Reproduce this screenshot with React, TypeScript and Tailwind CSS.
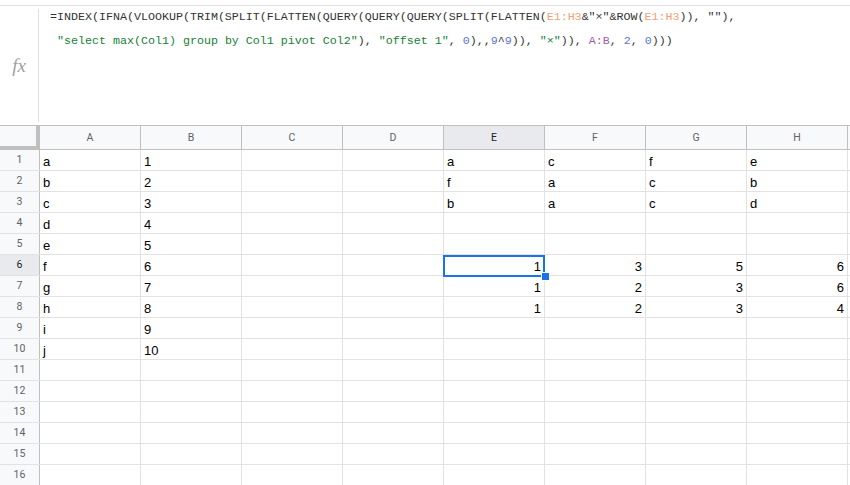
import React from "react";

const COLS = ["A", "B", "C", "D", "E", "F", "G", "H"];

type Cell = { v: string; num?: boolean };

function buildData(): Cell[][] {
  const rows: Cell[][] = [];
  const letters = "abcdefghij".split("");
  const top = [
    ["a", "c", "f", "e"],
    ["f", "a", "c", "b"],
    ["b", "a", "c", "d"],
  ];
  const nums = [
    ["1", "3", "5", "6"],
    ["1", "2", "3", "6"],
    ["1", "2", "3", "4"],
  ];
  for (let r = 0; r < 16; r++) {
    const row: Cell[] = [];
    for (let c = 0; c < 8; c++) row.push({ v: "" });
    if (r < 10) {
      row[0] = { v: letters[r] };
      row[1] = { v: String(r + 1) };
    }
    if (r < 3) {
      for (let c = 0; c < 4; c++) row[4 + c] = { v: top[r][c] };
    }
    if (r >= 5 && r < 8) {
      for (let c = 0; c < 4; c++) row[4 + c] = { v: nums[r - 5][c], num: true };
    }
    rows.push(row);
  }
  return rows;
}

const D = "text-[#333333]";
const S = "text-[#188038]";
const R = "text-[#f0a274]";
const P = "text-[#a35ab0]";
const N = "text-[#5c73d6]";

export default function App() {
  const data = buildData();
  return (
    <div
      className="relative w-[850px] h-[485px] overflow-hidden bg-white"
      style={{ fontFamily: "'Liberation Sans', Arial, sans-serif" }}
    >
      {/* formula bar */}
      <div className="h-[5px]" />
      <div className="flex h-[120px] border-t border-[#e0e0e0]">
        <div className="w-[38px] flex items-center justify-center pt-[2px]">
          <span
            className="italic text-[19px] text-[#a0a0a0]"
            style={{ fontFamily: "'Liberation Serif', 'Times New Roman', serif" }}
          >
            fx
          </span>
        </div>
        <div className="my-[3px] w-px bg-[#e0e0e0]" />
        <div
          className="pl-[11px] -mt-[1px] text-[11.67px] leading-[24px] whitespace-pre"
          style={{ fontFamily: "'Liberation Mono', 'DejaVu Sans Mono', monospace" }}
        >
          <div className={D}>
            {"=INDEX(IFNA(VLOOKUP(TRIM(SPLIT(FLATTEN(QUERY(QUERY(QUERY(SPLIT(FLATTEN("}
            <span className={R}>E1:H3</span>
            {'&"×"&ROW('}
            <span className={R}>E1:H3</span>
            {')), ""),'}
          </div>
          <div className={D}>
            {" "}
            <span className={S}>{'"select max(Col1) group by Col1 pivot Col2"'}</span>
            {"), "}
            <span className={S}>{'"offset 1"'}</span>
            {", "}
            <span className={N}>0</span>
            {"),,"}
            <span className={N}>9</span>
            {"^"}
            <span className={N}>9</span>
            {")), "}
            <span className={S}>{'"×"'}</span>
            {")), "}
            <span className={P}>A:B</span>
            {", "}
            <span className={N}>2</span>
            {", "}
            <span className={N}>0</span>
            {")))"}
          </div>
        </div>
      </div>

      {/* column header */}
      <div
        className="flex h-[25px] border-t border-b border-[#c0c0c0] bg-[#f8f9fa]"
        style={{ fontFamily: "Roboto, 'Liberation Sans', Arial, sans-serif" }}
      >
        <div className="w-[40px] shrink-0 border-r-[4px] border-b-[3px] border-[#c0c0c0] bg-[#f8f9fa]" />
        {COLS.map((c) => (
          <div
            key={c}
            className={
              "w-[101px] shrink-0 border-r border-[#c0c0c0] flex items-center justify-center text-[10.5px] " +
              (c === "E" ? "bg-[#e8eaed] text-[#202124]" : "text-[#5f6368]")
            }
          >
            {c}
          </div>
        ))}
        <div className="flex-1 bg-[#f8f9fa]" />
      </div>

      {/* rows */}
      {data.map((row, r) => (
        <div key={r} className="flex h-[21px] border-b border-[#e2e2e2]">
          <div
            className={
              "w-[40px] shrink-0 border-r border-[#c0c0c0] flex items-center justify-center text-[10.5px] " +
              (r === 5 ? "bg-[#e8eaed] text-[#202124]" : "bg-[#f8f9fa] text-[#5f6368]")
            }
            style={{ fontFamily: "Roboto, 'Liberation Sans', Arial, sans-serif" }}
          >
            {r + 1}
          </div>
          {row.map((cell, c) => (
            <div
              key={c}
              className={
                "w-[101px] shrink-0 border-r border-[#e2e2e2] flex items-end px-[3px] pb-[1px] text-[13px] leading-[15px] text-black " +
                (cell.num ? "justify-end" : "justify-start")
              }
            >
              {cell.v}
            </div>
          ))}
          <div className="flex-1" />
        </div>
      ))}

      {/* selection overlay on E6 */}
      <div className="absolute left-[443px] top-[255px] w-[102px] h-[22px] border-2 border-[#1a73e8] pointer-events-none" />
      <div className="absolute left-[541px] top-[272px] w-[7px] h-[7px] bg-[#1a73e8] border border-white pointer-events-none box-content" />
    </div>
  );
}
